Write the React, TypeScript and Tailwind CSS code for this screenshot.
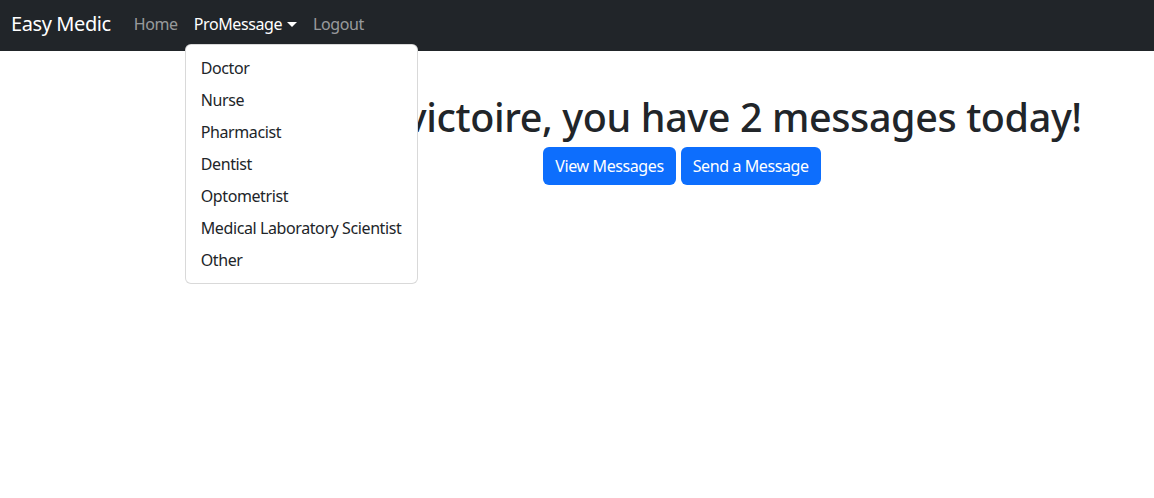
import React from "react";

const items = [
  "Doctor",
  "Nurse",
  "Pharmacist",
  "Dentist",
  "Optometrist",
  "Medical Laboratory Scientist",
  "Other",
];

export default function App() {
  return (
    <div
      className="min-h-[498px] bg-white text-[#212529] tracking-[-0.025em]"
      style={{ fontFamily: '"Noto Sans", "Open Sans", sans-serif' }}
    >
      <nav className="flex h-[51px] items-center bg-[#212529] pb-[4px] pl-[11px]">
        <span className="mr-[15px] text-[20px] leading-[30px] text-white">Easy Medic</span>
        <div className="flex items-center text-[16px] leading-[24px]">
          <span className="px-[8px] text-[rgba(255,255,255,0.55)]">Home</span>
          <div className="relative">
            <span className="flex items-center px-[8px] text-white">
              ProMessage
              <span className="ml-[5px] mt-[2px] h-0 w-0 border-x-[5px] border-t-[5px] border-x-transparent border-t-white" />
            </span>
            <div className="absolute left-[-1px] top-[32px] z-10 w-[233px] rounded-[6px] border border-[rgba(0,0,0,0.15)] bg-white py-[7px]">
              {items.map((it) => (
                <div key={it} className="whitespace-nowrap px-[15px] py-[4px] text-[16px] leading-[24px] text-[#212529]">
                  {it}
                </div>
              ))}
            </div>
          </div>
          <span className="px-[8px] text-[rgba(255,255,255,0.55)]">Logout</span>
        </div>
      </nav>
      <main className="flex flex-col items-center pl-[210px] pt-[43px]">
        <h1 className="ml-[18px] whitespace-nowrap text-[39.5px] font-medium leading-[47px] tracking-[-0.01em]">Hello victoire, you have 2 messages today!</h1>
        <div className="mt-[6px] flex gap-[5px]">
          <button className="h-[38px] rounded-[6px] bg-[#0d6efd] px-[12px] text-[16px] text-white">View Messages</button>
          <button className="h-[38px] rounded-[6px] bg-[#0d6efd] px-[12px] text-[16px] text-white">Send a Message</button>
        </div>
      </main>
    </div>
  );
}
